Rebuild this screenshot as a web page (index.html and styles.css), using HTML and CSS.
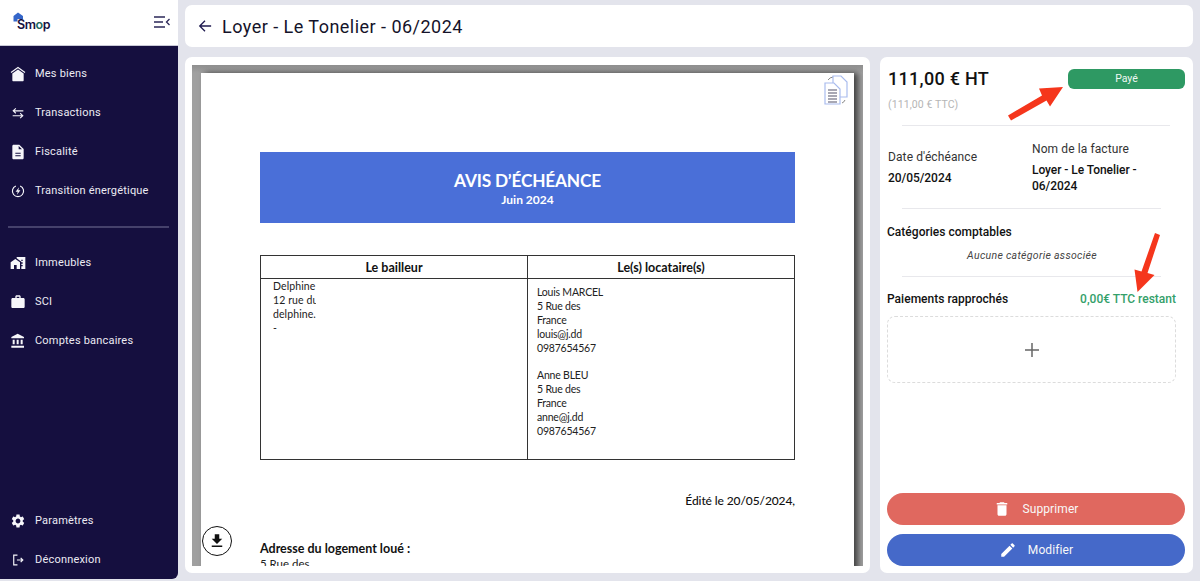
FILE: index.html
```html
<!DOCTYPE html>
<html lang="fr">
<head>
<meta charset="utf-8">
<title>Loyer - Le Tonelier - 06/2024</title>
<link rel="stylesheet" href="styles.css">
</head>
<body>
<div class="app">
  <aside class="sidebar">
    <div class="brand">
      <div class="logo">
        <svg class="logo-house" viewBox="0 0 10 10"><path d="M5 .5 .5 4v5.500h4V7H10V4z"/></svg>
        <span class="logo-text">Sm<span class="logo-o">o</span>p</span>
      </div>
      <svg class="collapse" viewBox="0 0 16 12"><path d="M0 1h11M0 6h9M0 11h11M15.500 3 12.500 6l3 3"/></svg>
    </div>
    <nav class="nav">
      <div class="nav-group">
        <a class="nav-item"><svg class="ico" viewBox="0 0 24 24"><path d="M12 1 1 9l1 1.400L12 3.200l10 7.200L23 9z"/><path d="M12 5.200 3.500 11.300V21.500c0 .8.700 1.500 1.500 1.500h14c.8 0 1.500-.7 1.500-1.500V11.300z"/></svg>Mes biens</a>
        <a class="nav-item"><svg class="ico ico-line ico-thin" viewBox="-3 -3 30 30"><path d="M22 8H3M8 3.500 3 8l5 4.500M2 17h19M16 12.500l5 4.500-5 4.500"/></svg>Transactions</a>
        <a class="nav-item"><svg class="ico" viewBox="0 0 24 24"><path d="M14 1H5.500C4.400 1 3.500 1.900 3.500 3v18c0 1.100.9 2 2 2h13c1.100 0 2-.9 2-2V7.500zM8 17h8v1.500H8zm0-4h8v1.500H8zM13 8V3l5 5z"/></svg>Fiscalité</a>
        <a class="nav-item"><svg class="ico ico-line" viewBox="-3 -3 30 30"><path d="M8 2.500a10.500 10.500 0 1 0 8 0"/><path class="ico-fill" d="M14 5 7.500 13.500h4L10 19l6.500-8.500h-4z"/></svg>Transition énergétique</a>
        <hr class="nav-sep">
        <a class="nav-item"><svg class="ico" viewBox="0 0 24 24"><path d="M1 11v10h5v-6h4v6h5V11L8 6zM10 3v1.970l7 5.030V11h2v2h-2v2h2v2h-2v4h6V3H10zm9 6h-2V7h2v2z"/></svg>Immeubles</a>
        <a class="nav-item"><svg class="ico" viewBox="0 0 24 24"><path d="M20 6h-4V4c0-1.110-.89-2-2-2h-4c-1.110 0-2 .89-2 2v2H4c-1.110 0-1.990.89-1.990 2L2 19c0 1.110.89 2 2 2h16c1.110 0 2-.89 2-2V8c0-1.110-.89-2-2-2zm-6 0h-4V4h4v2z"/></svg>SCI</a>
        <a class="nav-item"><svg class="ico" viewBox="0 0 24 24"><path d="M4 10v7h3v-7H4zm6 0v7h3v-7h-3zM2 22h19v-3H2v3zm14-12v7h3v-7h-3zm-4.500-9L2 6v2h19V6l-9.500-5z"/></svg>Comptes bancaires</a>
      </div>
      <div class="nav-group">
        <a class="nav-item"><svg class="ico" viewBox="0 0 24 24"><path d="M19.140 12.940c.04-.3.06-.61.06-.94 0-.32-.02-.64-.07-.94l2.030-1.580c.18-.14.23-.41.12-.61l-1.920-3.320c-.12-.22-.37-.29-.59-.22l-2.390.96c-.5-.38-1.030-.7-1.620-.94l-.36-2.540c-.04-.24-.24-.41-.48-.41h-3.840c-.24 0-.43.17-.47.41l-.36 2.540c-.59.24-1.130.57-1.620.94l-2.390-.96c-.22-.08-.47 0-.59.22L2.740 8.870c-.12.21-.08.47.12.61l2.030 1.580c-.05.3-.09.63-.09.94s.02.64.07.94l-2.030 1.580c-.18.14-.23.41-.12.61l1.920 3.320c.12.22.37.29.59.22l2.390-.96c.5.38 1.030.7 1.620.94l.36 2.540c.05.24.24.41.48.41h3.840c.24 0 .44-.17.47-.41l.36-2.540c.59-.24 1.130-.56 1.620-.94l2.390.96c.22.08.47 0 .59-.22l1.920-3.320c.12-.22.07-.47-.12-.61l-2.010-1.580zM12 15.600c-1.980 0-3.600-1.620-3.600-3.600s1.620-3.600 3.600-3.600 3.600 1.620 3.600 3.600-1.620 3.600-3.600 3.600z"/></svg>Paramètres</a>
        <a class="nav-item"><svg class="ico ico-line" viewBox="-3 -3 30 30"><path d="M11 3H4v18h7M10 12h11M17 8l4 4-4 4"/></svg>Déconnexion</a>
      </div>
    </nav>
  </aside>

  <main class="main">
    <header class="topbar">
      <svg class="back" viewBox="0 0 16 16"><path d="M15 8H2M8 2 2 8l6 6"/></svg>
      <h1 class="title">Loyer - Le Tonelier - 06/2024</h1>
    </header>

    <div class="content">
      <section class="viewer">
        <div class="pdf-frame">
          <div class="pdf-page">
            <svg class="pdf-copy" viewBox="0 0 24 30">
              <path class="copy-arc" d="M4 5a7 7 0 0 1 5-3M21 25a5 5 0 0 1-3 3"/>
              <path class="copy-sheet" d="M9 1h8l6 6v15H9z"/>
              <path class="copy-sheet" d="M1 8h9l6 6v15H1z"/>
              <path class="copy-lines" d="M4 15h9M4 18h9M4 21h9M4 24h9M4 27h9"/>
            </svg>
            <div class="pdf-banner">
              <div class="pdf-banner-title">AVIS D’ÉCHÉANCE</div>
              <div class="pdf-banner-sub">Juin 2024</div>
            </div>
            <div class="pdf-table">
              <div class="pdf-th">Le bailleur</div>
              <div class="pdf-th">Le(s) locataire(s)</div>
              <div class="pdf-td pdf-td-left">
                <div class="pdf-clip">Delphine</div>
                <div class="pdf-clip">12 rue du</div>
                <div class="pdf-clip">delphine.</div>
                <div class="pdf-clip">-</div>
              </div>
              <div class="pdf-td pdf-td-right">
                <div>Louis MARCEL</div>
                <div>5 Rue des</div>
                <div>France</div>
                <div>louis@j.dd</div>
                <div>0987654567</div>
                <div class="pdf-gap">Anne BLEU</div>
                <div>5 Rue des</div>
                <div>France</div>
                <div>anne@j.dd</div>
                <div>0987654567</div>
              </div>
            </div>
            <div class="pdf-date">Édité le 20/05/2024,</div>
            <div class="pdf-addr-title">Adresse du logement loué :</div>
            <div class="pdf-addr">5 Rue des</div>
          </div>
        </div>
        <button class="download" type="button" aria-label="Télécharger">
          <svg viewBox="0 0 24 24"><path d="M19 9h-4V3H9v6H5l7 7 7-7zM5 18v2h14v-2H5z"/></svg>
        </button>
      </section>

      <section class="details">
        <div class="price-row">
          <div class="price">111,00 € HT</div>
          <div class="badge">Payé</div>
        </div>
        <div class="price-ttc">(111,00 € TTC)</div>
        <hr class="sep sep-a">
        <div class="facts">
          <div class="fact fact-date">
            <div class="fact-label">Date d'échéance</div>
            <div class="fact-value">20/05/2024</div>
          </div>
          <div class="fact fact-name">
            <div class="fact-label">Nom de la facture</div>
            <div class="fact-value">Loyer - Le Tonelier - 06/2024</div>
          </div>
        </div>
        <hr class="sep sep-b">
        <div class="section-title">Catégories comptables</div>
        <div class="empty-note">Aucune catégorie associée</div>
        <hr class="sep sep-b sep-c">
        <div class="pay-row">
          <div class="section-title">Paiements rapprochés</div>
          <div class="remaining">0,00€ TTC restant</div>
        </div>
        <div class="dropzone">
          <svg viewBox="0 0 14 14"><path d="M7 0v14M0 7h14"/></svg>
        </div>
        <div class="actions">
          <button class="btn btn-red" type="button"><svg viewBox="0 0 24 24"><path d="M6 19c0 1.100.9 2 2 2h8c1.100 0 2-.9 2-2V7H6v12zM19 4h-3.500l-1-1h-5l-1 1H5v2h14V4z"/></svg>Supprimer</button>
          <button class="btn btn-blue" type="button"><svg viewBox="0 0 24 24"><path d="M3 17.250V21h3.750L17.810 9.940l-3.750-3.750L3 17.250zM20.710 7.040c.39-.39.39-1.020 0-1.410l-2.340-2.340c-.39-.39-1.020-.39-1.410 0l-1.830 1.830 3.750 3.750 1.830-1.830z"/></svg>Modifier</button>
        </div>
      </section>
    </div>
  </main>
</div>

<svg class="annotations" viewBox="0 0 1200 581">
  <path d="M1008 115.500 1042 95.500 1039 88.500 1063 87 1050 106.500 1046.500 100.500 1011 120.500z"/>
  <path d="M1155 233 1160 235 1147.500 273 1154.500 275 1137.500 292 1134.500 269.500 1141.500 271.500z"/>
</svg>
</body>
</html>
```
FILE: styles.css
```css
* { box-sizing: border-box; }
html, body { margin: 0; height: 100%; overflow: hidden; }
body {
  background: #e3e4ec;
  font-family: Roboto, "Liberation Sans", sans-serif;
  color: #111;
}
.app { display: flex; height: 581px; }

/* Sidebar */
.sidebar {
  width: 178px;
  height: 579px;
  flex: none;
  display: flex;
  flex-direction: column;
  background: #150f3f;
  border-radius: 0 0 6px 0;
  overflow: hidden;
}
.brand {
  height: 46px;
  flex: none;
  background: #fff;
  border-bottom: 1px solid #c9c9d6;
  display: flex;
  align-items: center;
  justify-content: space-between;
  padding: 0 8px 0 13px;
}
.logo { position: relative; padding: 2px 0 0 4px; }
.logo-house { position: absolute; left: 0; top: 0; width: 10px; height: 10px; fill: #3566c9; }
.logo-text { position: relative; font: 600 12.500px/16px Inter, sans-serif; color: #150f3f; letter-spacing: -.4px; }
.logo-o { color: #1d6a5f; }
.collapse { width: 16px; height: 12px; fill: none; stroke: #2b2758; stroke-width: 1.3; margin-top: -1px; }
.nav {
  flex: 1;
  display: flex;
  flex-direction: column;
  justify-content: space-between;
  padding: 8px 0 0;
}
.nav-item {
  display: flex;
  align-items: center;
  height: 39px;
  padding-left: 10px;
  gap: 9px;
  font-size: 11px;
  letter-spacing: .2px;
  color: #ecebf3;
}
.ico { width: 16px; height: 16px; flex: none; fill: #f6f6fa; }
.ico-line { fill: none; stroke: #f6f6fa; stroke-width: 2.2; }
.ico-thin { stroke-width: 2; }
.ico-fill { fill: #f6f6fa; stroke: none; }
.nav-sep { border: 0; height: 2px; background: #45416b; margin: 16px 9px 15px 8px; }

/* Main */
.main {
  flex: 1;
  min-width: 0;
  display: flex;
  flex-direction: column;
  padding: 5px 7px 8px 7px;
  gap: 10px;
}
.topbar {
  height: 42px;
  flex: none;
  background: #fff;
  border-radius: 7px;
  display: flex;
  align-items: center;
  padding: 0 0 0 13px;
  gap: 10px;
}
.back { width: 14px; height: 14px; fill: none; stroke: #1f1a50; stroke-width: 1.500; }
.title { margin: 0; font-size: 18px; font-weight: 400; letter-spacing: .47px; color: #15132a; }
.content { flex: 1; min-height: 0; display: flex; gap: 10px; }

/* Document viewer */
.viewer {
  position: relative;
  width: 685px;
  flex: none;
  background: #fff;
  border-radius: 7px;
  padding: 8px 7px 7px;
  overflow: hidden;
}
.pdf-frame {
  height: 100%;
  background: linear-gradient(#8f8f8f, #a0a0a0 8px);
  padding: 8px 9px 0;
  overflow: hidden;
}
.pdf-page {
  position: relative;
  height: 560px;
  background: #fff;
  padding: 79px 59px 0;
  box-shadow: 4px 0 6px rgba(0, 0, 0, .6);
  font-family: Lato, "Liberation Sans", sans-serif;
  color: #222;
}
.pdf-copy {
  position: absolute;
  top: 2px;
  right: 6px;
  width: 24px;
  height: 30px;
  fill: none;
}
.copy-arc { stroke: #888; stroke-width: 1; }
.copy-sheet { fill: #fff; stroke: #a9bcee; stroke-width: 1.200; }
.copy-lines { stroke: #a8a8b4; stroke-width: 1.800; }
.pdf-banner {
  height: 71px;
  background: #4a6fd8;
  color: #fff;
  text-align: center;
  font-weight: 700;
  padding-top: 18px;
}
.pdf-banner-title { font-size: 17.300px; line-height: 22px; letter-spacing: -.2px; }
.pdf-banner-sub { font-size: 12px; line-height: 15px; }
.pdf-table {
  margin-top: 32px;
  height: 205px;
  display: grid;
  grid-template-columns: 267px 1fr;
  grid-template-rows: 23px 1fr;
  border: 1px solid #333;
  font-size: 10.500px;
  letter-spacing: -.2px;
  line-height: 14px;
}
.pdf-th {
  display: flex;
  align-items: center;
  justify-content: center;
  padding-top: 1px;
  font-size: 12.500px;
  letter-spacing: 0;
  font-weight: 700;
  color: #111;
  border-bottom: 1px solid #333;
}
.pdf-th:first-child, .pdf-td-left { border-right: 1px solid #333; }
.pdf-td-left { padding: 0 0 0 12px; letter-spacing: .1px; }
.pdf-td-right { padding: 6px 0 0 9px; }
.pdf-clip { width: 43px; overflow: hidden; white-space: nowrap; }
.pdf-gap { margin-top: 13px; }
.pdf-date { margin-top: 33px; text-align: right; font-size: 12px; letter-spacing: -.1px; line-height: 15px; color: #111; font-weight: 500; }
.pdf-addr-title { margin-top: 33px; font-size: 12.500px; line-height: 15px; font-weight: 700; color: #111; }
.pdf-addr { font-size: 11.500px; line-height: 15px; }
.download {
  position: absolute;
  left: 17px;
  bottom: 17px;
  width: 30px;
  height: 30px;
  padding: 0;
  background: #fff;
  border: 1px solid #111;
  border-radius: 50%;
  display: flex;
  align-items: center;
  justify-content: center;
}
.download svg { width: 18px; height: 18px; fill: #111; }

/* Details */
.details {
  flex: 1;
  min-width: 0;
  background: #fff;
  border-radius: 7px;
  padding: 11px 8px 7px 7px;
  display: flex;
  flex-direction: column;
}
.price-row { display: flex; align-items: center; justify-content: space-between; padding-left: 1px; }
.price { font-size: 18px; line-height: 22px; font-weight: 500; letter-spacing: .3px; color: #111; }
.badge {
  width: 117px;
  height: 20px;
  background: #2e9963;
  color: #f0f8f3;
  border-radius: 6px;
  font-size: 10.500px;
  line-height: 20px;
  text-align: center;
  margin-top: -1px;
}
.price-ttc { margin-top: 8px; padding-left: 1px; font-size: 10.500px; line-height: 14px; color: #b5b5b5; letter-spacing: .1px; }
.sep { border: 0; height: 1px; background: #e8e8ec; margin: 0; }
.sep-a { margin: 13px 15px 0 15px; }
.sep-b { margin: 0 24px 0 15px; }
.sep-c { margin-top: 13px; }
.facts { display: flex; height: 82px; }
.fact-date { width: 145px; padding: 23px 0 0 1px; }
.fact-name { flex: 1; padding-top: 15px; padding-right: 20px; }
.fact-label { font-size: 12px; line-height: 16px; letter-spacing: .1px; color: #333; }
.fact-value { margin-top: 5px; font-size: 12px; line-height: 16px; font-weight: 500; letter-spacing: -.05px; color: #111; }
.section-title { font-size: 12px; line-height: 16px; font-weight: 500; letter-spacing: .02px; color: #111; }
.sep-b + .section-title { margin-top: 15px; }
.empty-note {
  margin-top: 9px;
  padding-right: 8px;
  text-align: center;
  font-size: 10.500px;
  line-height: 14px;
  font-style: italic;
  letter-spacing: .3px;
  color: #444;
}
.pay-row {
  display: flex;
  justify-content: space-between;
  margin-top: 14px;
  padding-right: 9px;
}
.remaining { font-size: 12px; line-height: 16px; font-weight: 500; color: #34a06a; }
.dropzone {
  width: 289px;
  height: 67px;
  margin-top: 9px;
  border: 1px dashed #dcdcdc;
  border-radius: 8px;
  display: flex;
  align-items: center;
  justify-content: center;
}
.dropzone svg { width: 14px; height: 14px; fill: none; stroke: #666; stroke-width: 1.500; }
.actions { margin-top: auto; display: flex; flex-direction: column; gap: 9px; }
.btn {
  height: 32px;
  border: 0;
  border-radius: 16px;
  color: #f8f8f8;
  font: 400 12px Roboto, sans-serif;
  letter-spacing: .1px;
  display: flex;
  align-items: center;
  justify-content: center;
  gap: 11px;
}
.btn svg { width: 18px; height: 18px; fill: #fff; }
.btn-red { background: #e0685f; }
.btn-blue { background: #4569c9; }

/* Red arrows drawn over the screenshot */
.annotations {
  position: absolute;
  left: 0;
  top: 0;
  width: 1200px;
  height: 581px;
  fill: #f5361c;
  pointer-events: none;
}
```
